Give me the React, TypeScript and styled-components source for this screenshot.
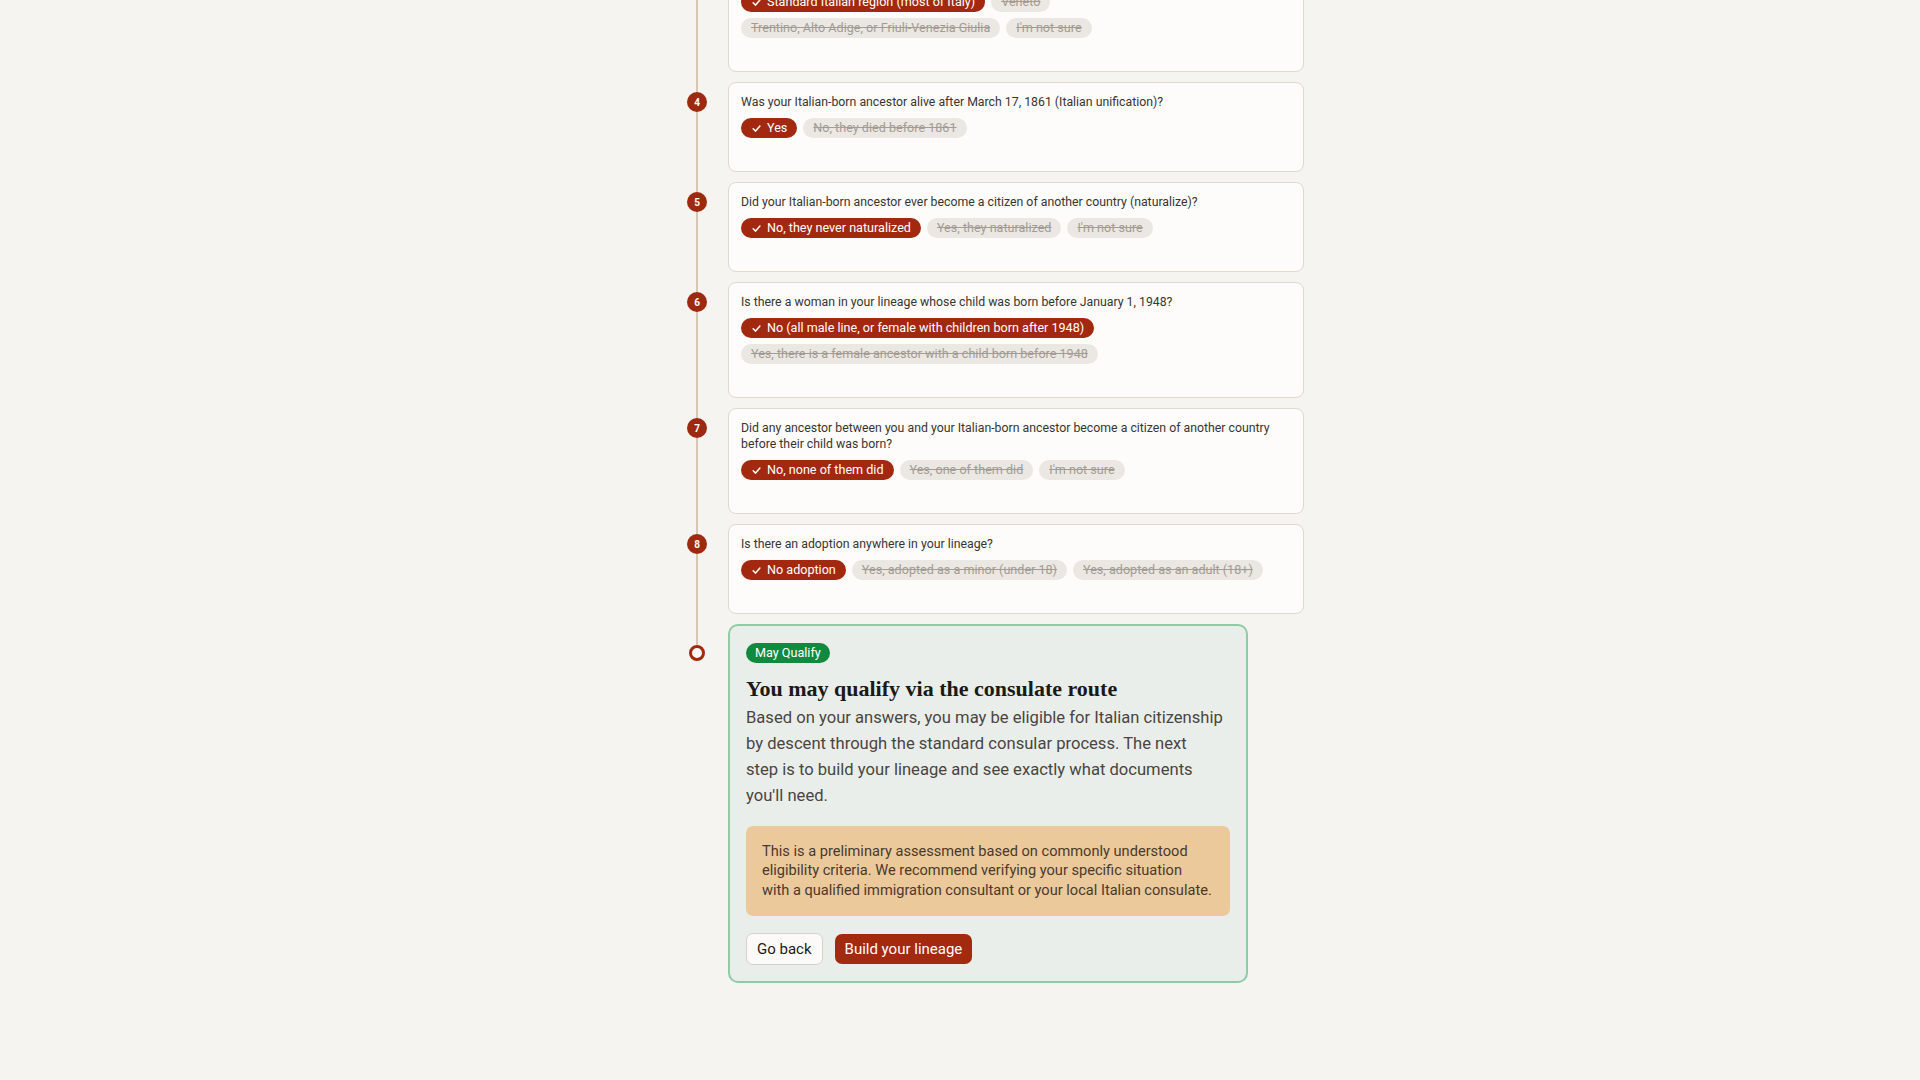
import React from "react";
import styled, { createGlobalStyle } from "styled-components";

const GlobalStyle = createGlobalStyle`
  html, body {
    margin: 0;
    padding: 0;
    background: #f6f4f1;
  }
  body {
    font-family: Roboto, "Liberation Sans", sans-serif;
    color: #3b3631;
    -webkit-font-smoothing: antialiased;
  }
`;

const Page = styled.main`
  min-height: 1080px;
  overflow: hidden;
`;

const Column = styled.div`
  width: 627px;
  margin-left: calc(50% - 283px);
  margin-top: -44px;
  padding-bottom: 98px;
  display: flex;
  flex-direction: column;
  gap: 10px;
`;

const Step = styled.section`
  display: grid;
  grid-template-columns: 40px auto;
  column-gap: 11px;
  align-items: start;
`;

const Rail = styled.div<{ $final?: boolean }>`
  position: relative;
  align-self: stretch;
  display: flex;
  justify-content: center;
  align-items: flex-start;
  padding-top: ${(p) => (p.$final ? "21px" : "10px")};

  &::before {
    content: "";
    position: absolute;
    left: 50%;
    width: 2px;
    margin-left: -1px;
    top: 0;
    ${(p) => (p.$final ? "height: 28px;" : "bottom: -10px;")}
    background: #d8c6b5;
  }
`;

const StepNumber = styled.span`
  position: relative;
  z-index: 1;
  width: 20px;
  height: 20px;
  border-radius: 50%;
  background: #9d2a10;
  color: #fff;
  font-size: 10px;
  font-weight: 700;
  display: flex;
  align-items: center;
  justify-content: center;
`;

const EndRing = styled.span`
  position: relative;
  z-index: 1;
  box-sizing: border-box;
  width: 16px;
  height: 16px;
  border-radius: 50%;
  border: 3px solid #a3290f;
  background: #fdfcfa;
`;

const QuestionCard = styled.div`
  width: 576px;
  box-sizing: border-box;
  background: #fdfcfa;
  border: 1px solid #ddd8d1;
  border-radius: 8px;
  padding: 11px 12px 33px;
`;

const Question = styled.p`
  margin: 0 0 8px;
  font-size: 12.3px;
  line-height: 16px;
  color: #3a3530;
`;

const Options = styled.div`
  display: flex;
  flex-wrap: wrap;
  gap: 6px;
`;

const Chip = styled.span<{ $selected?: boolean }>`
  display: inline-flex;
  align-items: center;
  gap: 6px;
  height: 20px;
  padding: 0 10px 0 ${(p) => (p.$selected ? "11px" : "10px")};
  border-radius: 999px;
  font-size: 12.6px;
  line-height: 14px;
  white-space: nowrap;
  background: ${(p) => (p.$selected ? "#a2290f" : "#ebe7e2")};
  color: ${(p) => (p.$selected ? "#fff" : "#a39c94")};
  text-decoration: ${(p) => (p.$selected ? "none" : "line-through")};
`;

const CheckMark = () => (
  <svg width="9" height="9" viewBox="0 0 9 9" fill="none">
    <polyline
      points="1.2,4.8 3.6,7.1 7.9,2"
      stroke="#fff"
      strokeWidth="1.5"
      strokeLinecap="round"
      strokeLinejoin="round"
    />
  </svg>
);

const ResultCard = styled.div`
  width: 520px;
  box-sizing: border-box;
  background: #e9eeeb;
  border: 2px solid #8fcca5;
  border-radius: 10px;
  padding: 16px;
`;

const Badge = styled.span`
  display: inline-flex;
  align-items: center;
  height: 20px;
  padding: 0 9px;
  border-radius: 999px;
  background: #0f8a3e;
  color: #fff;
  font-size: 12.6px;
`;

const ResultTitle = styled.h2`
  margin: 12px 0 2px;
  font-family: "Liberation Serif", "DejaVu Serif", serif;
  font-weight: 700;
  font-size: 22px;
  line-height: 28px;
  color: #1c1917;
`;

const ResultText = styled.p`
  margin: 0;
  font-size: 16.6px;
  line-height: 26.3px;
  color: #4a4540;
`;

const Notice = styled.div`
  margin-top: 16px;
  padding: 16px 12px 16px 16px;
  border-radius: 7px;
  background: #ebc99b;
  color: #4a3a2b;
  font-size: 14.6px;
  line-height: 19.6px;
`;

const Actions = styled.div`
  margin-top: 17px;
  display: flex;
  align-items: center;
  gap: 12px;
`;

const Button = styled.button<{ $primary?: boolean }>`
  font-family: inherit;
  font-size: 15px;
  height: ${(p) => (p.$primary ? "30px" : "32px")};
  padding: 0 10px;
  border-radius: 7px;
  cursor: pointer;
  border: ${(p) => (p.$primary ? "none" : "1px solid #d6d1cb")};
  background: ${(p) => (p.$primary ? "#a3290f" : "#fbfaf8")};
  color: ${(p) => (p.$primary ? "#fff" : "#1f1b17")};
`;

type Item = {
  n: number;
  question: string;
  options: string[];
  picked: number;
};

const items: Item[] = [
  {
    n: 3,
    question: "In which region of Italy was your Italian-born ancestor born?",
    options: [
      "Standard Italian region (most of Italy)",
      "Veneto",
      "Trentino, Alto Adige, or Friuli-Venezia Giulia",
      "I'm not sure",
    ],
    picked: 0,
  },
  {
    n: 4,
    question:
      "Was your Italian-born ancestor alive after March 17, 1861 (Italian unification)?",
    options: ["Yes", "No, they died before 1861"],
    picked: 0,
  },
  {
    n: 5,
    question:
      "Did your Italian-born ancestor ever become a citizen of another country (naturalize)?",
    options: ["No, they never naturalized", "Yes, they naturalized", "I'm not sure"],
    picked: 0,
  },
  {
    n: 6,
    question:
      "Is there a woman in your lineage whose child was born before January 1, 1948?",
    options: [
      "No (all male line, or female with children born after 1948)",
      "Yes, there is a female ancestor with a child born before 1948",
    ],
    picked: 0,
  },
  {
    n: 7,
    question:
      "Did any ancestor between you and your Italian-born ancestor become a citizen of another country before their child was born?",
    options: ["No, none of them did", "Yes, one of them did", "I'm not sure"],
    picked: 0,
  },
  {
    n: 8,
    question: "Is there an adoption anywhere in your lineage?",
    options: [
      "No adoption",
      "Yes, adopted as a minor (under 18)",
      "Yes, adopted as an adult (18+)",
    ],
    picked: 0,
  },
];

export default function App() {
  return (
    <Page>
      <GlobalStyle />
      <Column>
        {items.map((item) => (
          <Step key={item.n}>
            <Rail>
              <StepNumber>{item.n}</StepNumber>
            </Rail>
            <QuestionCard>
              <Question>{item.question}</Question>
              <Options>
                {item.options.map((opt, i) => (
                  <Chip key={opt} $selected={i === item.picked}>
                    {i === item.picked && <CheckMark />}
                    {opt}
                  </Chip>
                ))}
              </Options>
            </QuestionCard>
          </Step>
        ))}
        <Step>
          <Rail $final>
            <EndRing />
          </Rail>
          <ResultCard>
            <Badge>May Qualify</Badge>
            <ResultTitle>You may qualify via the consulate route</ResultTitle>
            <ResultText>
              Based on your answers, you may be eligible for Italian citizenship
              by descent through the standard consular process. The next
              <br />
              step is to build your lineage and see exactly what documents
              you'll need.
            </ResultText>
            <Notice>
              This is a preliminary assessment based on commonly understood
              eligibility criteria. We recommend verifying your specific situation
              <br />
              with a qualified immigration consultant or your local Italian
              consulate.
            </Notice>
            <Actions>
              <Button>Go back</Button>
              <Button $primary>Build your lineage</Button>
            </Actions>
          </ResultCard>
        </Step>
      </Column>
    </Page>
  );
}
